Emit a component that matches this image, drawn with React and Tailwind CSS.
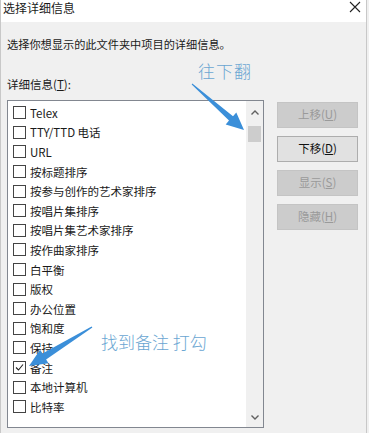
import React from 'react';

const items = [
  { label: 'Telex' },
  { label: 'TTY/TTD 电话' },
  { label: 'URL' },
  { label: '按标题排序' },
  { label: '按参与创作的艺术家排序' },
  { label: '按唱片集排序' },
  { label: '按唱片集艺术家排序' },
  { label: '按作曲家排序' },
  { label: '白平衡' },
  { label: '版权' },
  { label: '办公位置' },
  { label: '饱和度' },
  { label: '保持' },
  { label: '备注', checked: true },
  { label: '本地计算机' },
  { label: '比特率' },
];

const Check = ({ checked }) => (
  <span className="w-[13px] h-[13px] border border-[#444] bg-white shrink-0 flex items-center justify-center">
    {checked && (
      <svg width="9" height="9" viewBox="0 0 9 9">
        <path d="M1 4.5 L3.5 7 L8 1.5" fill="none" stroke="#222" strokeWidth="1.1" />
      </svg>
    )}
  </span>
);

const Btn = ({ children, enabled }) => (
  <div
    className={
      enabled
        ? 'w-[81px] h-[26px] flex items-center justify-center border border-[#adadad] bg-[#e1e1e1] text-[#111]'
        : 'w-[81px] h-[26px] flex items-center justify-center border border-[#c4c4c4] bg-[#cccccc] text-[#9a9a9a]'
    }
  >
    {children}
  </div>
);

export default function App() {
  return (
    <div
      className="relative w-[369px] h-[433px] overflow-hidden bg-[#f0f0f0] text-[#1a1a1a]"
      style={{ fontFamily: '"Noto Sans CJK SC", "Noto Sans", sans-serif' }}
    >
      <div className="w-[367px] h-full border-r border-l border-[#c8c8c8] flex flex-col">
        {/* Title bar */}
        <div className="h-[22px] bg-white flex items-start justify-between pl-[2px] pr-[5px] shrink-0">
          <span className="text-[12px] leading-[16px]">选择详细信息</span>
          <svg width="12" height="12" viewBox="0 0 12 12" className="mt-[1px]">
            <path d="M1 1 L11 11 M11 1 L1 11" stroke="#222" strokeWidth="1.1" />
          </svg>
        </div>

        <div className="px-[6px] flex flex-col">
          <p className="text-[11.2px] leading-[14px] mt-[15px]">选择你想显示的此文件夹中项目的详细信息。</p>
          <p className="text-[11.5px] leading-[14px] mt-[26px]">
            详细信息(<u>T</u>):
          </p>

          <div className="flex mt-[9px]">
            {/* List box */}
            <div className="w-[257px] h-[328px] border border-[#828790] bg-white flex">
              <div className="flex-1 pt-[2px] flex flex-col">
                {items.map((it) => (
                  <div key={it.label} className="h-[19.6px] flex items-center pl-[5px] gap-[4px]">
                    <Check checked={it.checked} />
                    <span className="text-[11.5px] leading-[14px] whitespace-nowrap">{it.label}</span>
                  </div>
                ))}
              </div>
              {/* Scrollbar */}
              <div className="w-[17px] bg-[#f0f0f0] flex flex-col items-center">
                <svg width="8" height="5" viewBox="0 0 8 5" className="mt-[9px]">
                  <path d="M0.5 4.5 L4 1 L7.5 4.5" fill="none" stroke="#606060" strokeWidth="1.4" />
                </svg>
                <div className="w-[13px] h-[16px] bg-[#cdcdcd] mt-[11px]" />
                <div className="flex-1" />
                <svg width="8" height="5" viewBox="0 0 8 5" className="mb-[7px]">
                  <path d="M0.5 0.5 L4 4 L7.5 0.5" fill="none" stroke="#606060" strokeWidth="1.4" />
                </svg>
              </div>
            </div>

            {/* Buttons */}
            <div className="ml-[13px] mt-[2px] flex flex-col gap-[8px] text-[11.5px]">
              <Btn>上移(<u>U</u>)</Btn>
              <Btn enabled>下移(<u>D</u>)</Btn>
              <Btn>显示(<u>S</u>)</Btn>
              <Btn>隐藏(<u>H</u>)</Btn>
            </div>
          </div>
        </div>
      </div>

      {/* Annotations */}
      <span className="absolute left-[198px] top-[60px] text-[17px] leading-[22px] font-light text-[#6aa6d2] tracking-[1px]">往下翻</span>
      <span className="absolute left-[101px] top-[331px] text-[17px] leading-[22px] font-light text-[#6aa6d2]">找到备注 打勾</span>
      <svg className="absolute left-0 top-0 pointer-events-none" width="369" height="433" viewBox="0 0 369 433">
        <polygon
          points="192.3,83.6 233,116.2 236.3,112.4 244,130 225.7,124.4 229,120.6 191.7,84.4"
          fill="#3b8fd9"
        />
        <polygon
          points="92.4,327.6 46.1,359.5 48.5,363.3 29,366 40.1,349.7 42.5,353.5 91.6,326.4"
          fill="#3b8fd9"
        />
      </svg>
    </div>
  );
}
